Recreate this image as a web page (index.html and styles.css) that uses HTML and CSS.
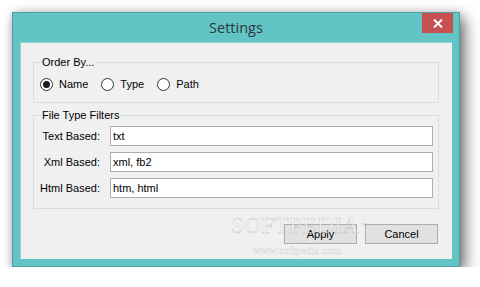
FILE: index.html
```html
<!DOCTYPE html>
<html lang="en">

<head>
    <meta charset="UTF-8" />
    <title>Settings</title>
    <link rel="stylesheet" href="styles.css">
</head>

<body>
    <div class="window">
        <div class="titlebar">
            <span class="title">Settings</span>
            <button class="close" type="button" aria-label="Close">
                <svg width="10" height="9" viewBox="0 0 10 9">
                    <path d="M1 0.5 L9 8.5 M9 0.5 L1 8.5" stroke="#fff" stroke-width="2" fill="none" />
                </svg>
            </button>
        </div>

        <div class="client">
            <fieldset class="group">
                <legend>Order By...</legend>
                <div class="radios">
                    <label><input type="radio" name="order" checked><span>Name</span></label>
                    <label><input type="radio" name="order"><span>Type</span></label>
                    <label><input type="radio" name="order"><span>Path</span></label>
                </div>
            </fieldset>

            <fieldset class="group filters">
                <legend>File Type Filters</legend>
                <div class="rows">
                    <label for="f-text">Text Based:</label>
                    <input id="f-text" type="text" value="txt">
                    <label for="f-xml">Xml Based:</label>
                    <input id="f-xml" type="text" value="xml, fb2">
                    <label for="f-html">Html Based:</label>
                    <input id="f-html" type="text" value="htm, html">
                </div>
            </fieldset>

            <div class="buttons">
                <button type="button">Apply</button>
                <button type="button">Cancel</button>
            </div>
        </div>

        <div class="watermark">
            <span class="wm-logo">SOFTPEDIA<sup>™</sup></span>
            <span class="wm-url">www.softpedia.com</span>
        </div>
    </div>
</body>

</html>
```

FILE: styles.css
```css
* {
    box-sizing: border-box;
}

body {
    margin: 0;
    background: #fff;
    font-family: "Liberation Sans", Arial, sans-serif;
    font-size: 11px;
    color: #000;
}

.window {
    position: relative;
    width: 448px;
    height: 255px;
    margin: 12px 0 0 12px;
    background: #62c4c4;
    border: 1px solid #4f9f9f;
    box-shadow: 5px 6px 14px rgba(0, 0, 0, 0.55), 0 0 8px rgba(0, 0, 0, 0.15);
    display: flex;
    flex-direction: column;
}

.titlebar {
    height: 29px;
    display: flex;
    align-items: center;
    justify-content: center;
}

.title {
    font-family: "Open Sans", "Noto Sans", sans-serif;
    font-size: 14.5px;
    color: #2b3a3a;
    margin-top: -1px;
}

.close {
    position: absolute;
    top: 0;
    right: 6px;
    width: 31px;
    height: 20px;
    border: 0;
    padding: 0;
    background: #c75050;
    display: flex;
    align-items: center;
    justify-content: center;
}

.client {
    margin: 0 7px 7px 7px;
    flex: 1;
    background: #f0f0f0;
    border: 1px solid #8fd3d3;
    border-right-color: #f0f0f0;
    border-bottom-color: #f0f0f0;
    padding: 13px 12px 13px 12px;
    display: flex;
    flex-direction: column;
}

.group {
    margin: 0;
    padding: 0;
    border: 1px solid #dcdcdc;
    min-width: 0;
}

.group legend {
    line-height: 13px;
    padding: 0 1px;
    margin-left: 7px;
    font-size: 11px;
}

.radios {
    display: flex;
    padding: 9px 0 11px 6px;
    line-height: 13px;
}

.radios label {
    display: flex;
    align-items: center;
    gap: 6px;
    margin-right: 13px;
}

.radios input {
    appearance: none;
    -webkit-appearance: none;
    margin: 0;
    width: 13px;
    height: 13px;
    border: 1px solid #333;
    border-radius: 50%;
    background: #fff;
    display: flex;
    align-items: center;
    justify-content: center;
}

.radios input:checked::after {
    content: "";
    width: 7px;
    height: 7px;
    border-radius: 50%;
    background: #1a1a1a;
}

.filters {
    margin-top: 6px;
}

.rows {
    display: grid;
    grid-template-columns: 66px 1fr;
    column-gap: 10px;
    row-gap: 6px;
    padding: 4px 5px 10px 0;
    align-items: center;
}

.rows label {
    text-align: right;
    white-space: nowrap;
}

.rows input {
    height: 20px;
    margin: 0;
    padding: 0 2px;
    border: 1px solid #abadb3;
    background: #fff;
    font-family: "Liberation Sans", Arial, sans-serif;
    font-size: 11px;
    color: #000;
    outline: none;
}

.buttons {
    display: flex;
    justify-content: flex-end;
    gap: 8px;
    margin-top: 15px;
    padding-right: 1px;
}

.buttons button {
    width: 73px;
    height: 20px;
    margin: 0;
    padding: 0;
    background: #e1e1e1;
    border: 1px solid #adadad;
    font-family: "Liberation Sans", Arial, sans-serif;
    font-size: 11px;
    color: #000;
}

.watermark {
    position: absolute;
    left: 218px;
    top: 203px;
    display: flex;
    flex-direction: column;
    align-items: flex-start;
    pointer-events: none;
}

.wm-logo {
    font-family: "Liberation Serif", serif;
    font-size: 23px;
    line-height: 20px;
    letter-spacing: 0.5px;
    color: rgba(255, 255, 255, 0.55);
    -webkit-text-stroke: 0.6px rgba(150, 150, 150, 0.4);
}

.wm-logo sup {
    font-family: "Liberation Sans", sans-serif;
    font-size: 7px;
    -webkit-text-stroke: 0;
    color: rgba(160, 160, 160, 0.6);
    vertical-align: top;
    margin-left: 1px;
}

.wm-url {
    margin: 8px 0 0 22px;
    font-family: "Liberation Serif", serif;
    font-size: 11px;
    color: rgba(255, 255, 255, 0.7);
    -webkit-text-stroke: 0.4px rgba(160, 160, 160, 0.4);
}
```
